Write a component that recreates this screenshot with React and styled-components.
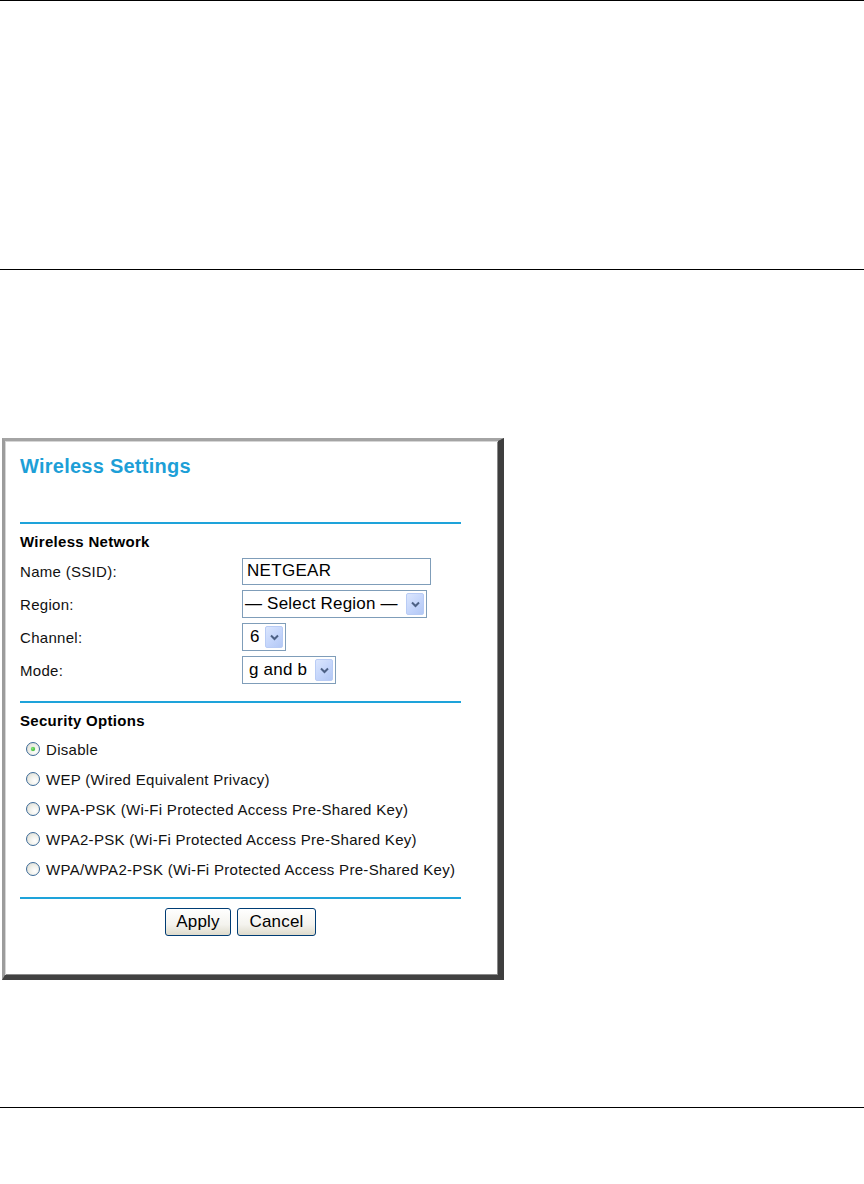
import React from 'react';
import styled, { createGlobalStyle } from 'styled-components';

const GlobalStyle = createGlobalStyle`
  html, body {
    margin: 0;
    padding: 0;
    background: #fff;
  }
  body {
    font-family: 'Liberation Sans', Arial, sans-serif;
    color: #000;
  }
`;

const Page = styled.div`
  width: 864px;
  min-height: 1184px;
  background: #fff;
`;

const HeaderBand = styled.div`
  height: 268px;
  border-top: 1px solid #000;
  border-bottom: 1px solid #000;
`;

const Figure = styled.div`
  padding-top: 168px;
`;

const Panel = styled.div`
  margin-left: 2px;
  background: #fff;
  border-style: solid;
  border-width: 3px 6px 5px 3px;
  border-color: #a4a4a4 #3e3e3e #414141 #9c9c9c;
  box-shadow: inset 1px 1px 0 #d6d6d6, inset -1px -1px 0 #8a8a8a;
  padding: 13px 0 0 15px;
  box-sizing: content-box;
  display: flex;
  flex-direction: column;
  width: 478px;
  height: 521px;
`;

const Title = styled.div`
  font-size: 20px;
  line-height: 24px;
  font-weight: bold;
  letter-spacing: 0.25px;
  color: #1d9fd7;
`;

const BlueRule = styled.div`
  width: 441px;
  height: 2px;
  background: #1ea3da;
  margin-top: ${p => p.$top}px;
`;

const SectionHead = styled.div`
  font-size: 15px;
  line-height: 18px;
  font-weight: bold;
  letter-spacing: 0.3px;
  margin-top: 9px;
`;

const FormGrid = styled.div`
  display: grid;
  grid-template-columns: 222px auto;
  row-gap: 5px;
  margin-top: 6px;
`;

const Label = styled.div`
  height: 28px;
  display: flex;
  align-items: center;
  font-size: 15px;
  letter-spacing: 0.3px;
  color: #111;
`;

const Field = styled.div`
  height: 28px;
  display: flex;
  align-items: center;
`;

const TextBox = styled.div`
  box-sizing: border-box;
  width: ${p => p.$w}px;
  height: 27px;
  border: 1px solid #7f9db9;
  display: flex;
  align-items: center;
  padding-left: 4px;
  font-size: 17px;
  letter-spacing: 0.3px;
  background: #fff;
`;

const SelectBox = styled.div`
  box-sizing: border-box;
  width: ${p => p.$w}px;
  height: 28px;
  border: 1px solid #7f9db9;
  display: flex;
  align-items: center;
  justify-content: space-between;
  padding: 0 2px 0 ${p => p.$padLeft}px;
  font-size: 17px;
  letter-spacing: 0.2px;
  background: #fff;
  white-space: nowrap;
`;

const ArrowButton = styled.div`
  width: 18px;
  height: 22px;
  border-radius: 2px;
  border: 1px solid #b9ccf5;
  box-sizing: border-box;
  background: linear-gradient(135deg, #dbe6fd 0%, #c4d5fb 55%, #b3c8f5 100%);
  display: flex;
  align-items: center;
  justify-content: center;
`;

const RadioList = styled.div`
  display: flex;
  flex-direction: column;
  margin-top: 4px;
`;

const RadioRow = styled.div`
  height: 30px;
  display: flex;
  align-items: center;
  padding-left: 6px;
  font-size: 15px;
  letter-spacing: 0.3px;
  color: #111;
`;

const RadioCircle = styled.span`
  position: relative;
  width: 14px;
  height: 14px;
  border-radius: 50%;
  box-sizing: border-box;
  border: 1px solid #3c6a98;
  background: radial-gradient(circle at 65% 65%, #ffffff 0%, #f0f0ea 45%, #d6d6cc 100%);
  margin-right: 6px;
  flex-shrink: 0;
  &::after {
    content: '';
    display: ${p => (p.$checked ? 'block' : 'none')};
    position: absolute;
    left: 4px;
    top: 4px;
    width: 4px;
    height: 4px;
    border-radius: 50%;
    background: radial-gradient(circle at 40% 40%, #8ee87f 0%, #2fb52a 70%, #1f8e1c 100%);
    box-shadow: 0 0 1px #5ccf50;
  }
`;

const ButtonRow = styled.div`
  width: 441px;
  display: flex;
  justify-content: center;
  gap: 6px;
  margin-top: 9px;
`;

const Button = styled.button`
  width: ${p => p.$w}px;
  height: 28px;
  padding: 0;
  border: 1px solid #003c74;
  border-radius: 3px;
  background: linear-gradient(#ffffff 0%, #f4f3ee 60%, #dedbcc 100%);
  font-family: 'Liberation Sans', Arial, sans-serif;
  font-size: 17px;
  letter-spacing: 0.2px;
  color: #000;
`;

const BottomRule = styled.div`
  margin-top: 127px;
  height: 1px;
  background: #000;
`;

const Chevron = () => (
  <svg width="9" height="7" viewBox="0 0 9 7">
    <path d="M1 1.5 L4.5 5 L8 1.5" fill="none" stroke="#4d6185" strokeWidth="2" />
  </svg>
);

const Select = ({ width, value, padLeft = 7 }) => (
  <SelectBox $w={width} $padLeft={padLeft}>
    <span>{value}</span>
    <ArrowButton>
      <Chevron />
    </ArrowButton>
  </SelectBox>
);

const options = [
  { label: 'Disable', checked: true },
  { label: 'WEP (Wired Equivalent Privacy)' },
  { label: 'WPA-PSK (Wi-Fi Protected Access Pre-Shared Key)' },
  { label: 'WPA2-PSK (Wi-Fi Protected Access Pre-Shared Key)' },
  { label: 'WPA/WPA2-PSK (Wi-Fi Protected Access Pre-Shared Key)' },
];

export default function App() {
  return (
    <Page>
      <GlobalStyle />
      <HeaderBand />
      <Figure>
        <Panel>
          <Title>Wireless Settings</Title>
          <BlueRule $top={44} />
          <SectionHead>Wireless Network</SectionHead>
          <FormGrid>
            <Label>Name (SSID):</Label>
            <Field>
              <TextBox $w={189}>NETGEAR</TextBox>
            </Field>
            <Label>Region:</Label>
            <Field>
              <Select width={185} value="— Select Region —" padLeft={2} />
            </Field>
            <Label>Channel:</Label>
            <Field>
              <Select width={44} value="6" />
            </Field>
            <Label>Mode:</Label>
            <Field>
              <Select width={94} value="g and b" padLeft={6} />
            </Field>
          </FormGrid>
          <BlueRule $top={17} />
          <SectionHead>Security Options</SectionHead>
          <RadioList>
            {options.map(o => (
              <RadioRow key={o.label}>
                <RadioCircle $checked={o.checked} />
                {o.label}
              </RadioRow>
            ))}
          </RadioList>
          <BlueRule $top={13} />
          <ButtonRow>
            <Button $w={66}>Apply</Button>
            <Button $w={79}>Cancel</Button>
          </ButtonRow>
        </Panel>
      </Figure>
      <BottomRule />
    </Page>
  );
}
